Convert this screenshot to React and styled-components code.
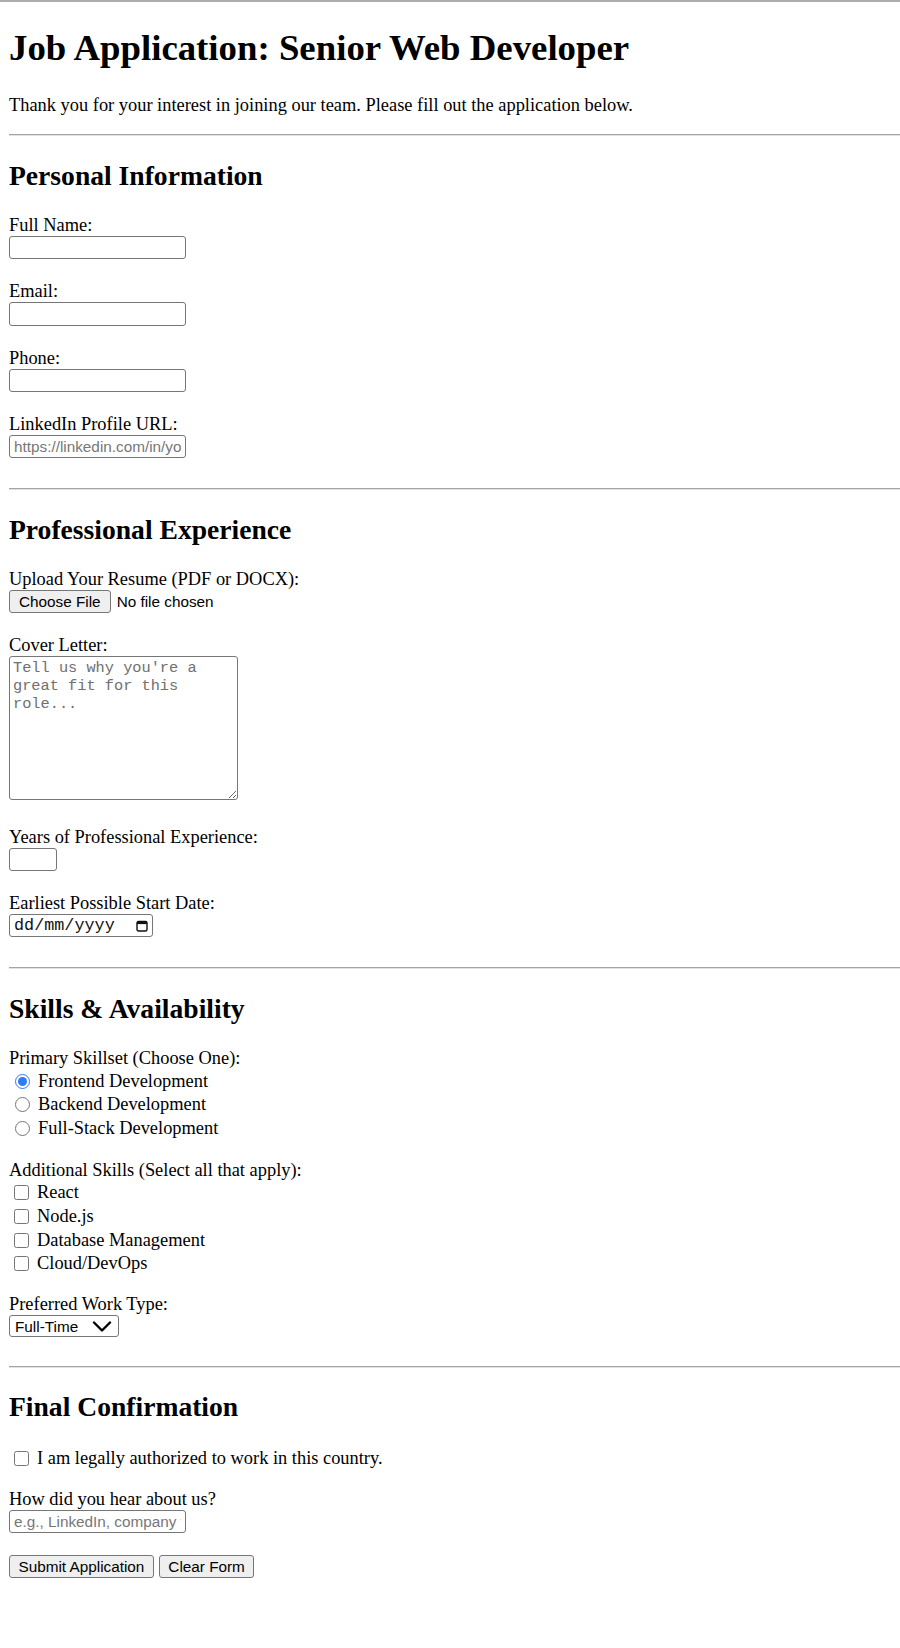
import styled, { createGlobalStyle } from "styled-components";

const GlobalStyle = createGlobalStyle`
  html, body {
    margin: 0;
    padding: 0;
    background: #fff;
  }
  body {
    font-family: "Liberation Serif", "Times New Roman", serif;
    font-size: 18.4px;
    color: #000;
  }
`;

const TopEdge = styled.div`
  height: 2px;
  background: #adadb0;
`;

const Page = styled.div`
  padding: 0 0 60px 9px;
`;

const Title = styled.h1`
  margin: 25px 0 0;
  font-size: 36.8px;
  line-height: 42px;
  font-weight: bold;
`;

const Intro = styled.p`
  margin: 26px 0 0;
  line-height: 21px;
`;

const Divider = styled.hr`
  margin: ${(p) => p.$top}px 0 0;
  height: 0;
  border: none;
  border-top: 1px solid #a4a4a4;
  border-bottom: 1px solid #e2e2e2;
`;

const Section = styled.section`
  padding-bottom: 10px;
`;

const SectionTitle = styled.h2`
  margin: ${(p) => p.$top ?? 24}px 0 21px;
  font-size: 27.6px;
  line-height: 32px;
  font-weight: bold;
`;

const Field = styled.div`
  padding-top: ${(p) => p.$top || 0}px;
  margin-bottom: ${(p) => p.$bottom ?? 20}px;
`;

const Label = styled.label`
  display: block;
  padding-top: 2px;
  line-height: 21px;
`;

const TextInput = styled.input`
  display: block;
  box-sizing: border-box;
  width: ${(p) => p.$w || 177}px;
  height: 23.3px;
  margin: 0;
  padding: 1px 4px;
  border: 1px solid #767676;
  border-radius: 3px;
  font-family: "Liberation Sans", Arial, sans-serif;
  font-size: 15.3px;
  color: #000;
  background: #fff;

  &::placeholder {
    color: #777;
  }
`;

const FileInput = styled.input`
  display: block;
  height: 23px;
  margin: 0;
  font-family: "Liberation Sans", Arial, sans-serif;
  font-size: 15.3px;
  color: #000;

  &::file-selector-button {
    box-sizing: border-box;
    height: 23px;
    margin: 0 6px 0 0;
    padding: 0 9px;
    border: 1px solid #767676;
    border-radius: 3px;
    background: #efefef;
    font-family: "Liberation Sans", Arial, sans-serif;
    font-size: 15.3px;
    color: #000;
  }
`;

const TextArea = styled.textarea`
  display: block;
  box-sizing: border-box;
  width: 229px;
  height: 144px;
  margin: 0;
  padding: 2px 3px;
  border: 1px solid #767676;
  border-radius: 3px;
  font-family: "Liberation Mono", "Courier New", monospace;
  font-size: 15.3px;
  line-height: 18px;

  &::placeholder {
    color: #707070;
  }
`;

const DateBox = styled.div`
  position: relative;
  width: 144px;
`;

const DateInput = styled(TextInput)`
  width: 144px;
  padding: 1px 4px;
  font-family: "Liberation Mono", "DejaVu Sans Mono", monospace;
  font-size: 16.8px;

  &::placeholder {
    color: #111;
  }
`;

const CalendarIcon = styled.svg`
  position: absolute;
  left: 127px;
  top: 6px;
  width: 12px;
  height: 12px;
  pointer-events: none;
`;

const OptionList = styled.div`
  display: flex;
  flex-direction: column;
`;

const Option = styled.label`
  display: flex;
  align-items: center;
  height: 23.6px;
  line-height: 21px;
`;

const Radio = styled.input`
  width: 15px;
  height: 15px;
  margin: 0 8px 0 6px;
  accent-color: #2f7bf5;
`;

const Check = styled.input`
  width: 15px;
  height: 15px;
  margin: 0 8px 0 5px;
`;

const SelectBox = styled.div`
  position: relative;
  width: 110px;
`;

const Select = styled.select`
  display: block;
  box-sizing: border-box;
  width: 110px;
  height: 22px;
  margin: 0;
  padding: 0 24px 0 5px;
  appearance: none;
  border: 1px solid #767676;
  border-radius: 3px;
  background: #fff;
  font-family: "Liberation Sans", Arial, sans-serif;
  font-size: 15.3px;
  color: #000;
`;

const Chevron = styled.svg`
  position: absolute;
  left: 83px;
  top: 6px;
  width: 20px;
  height: 11px;
  pointer-events: none;
`;

const Actions = styled.div`
  display: flex;
  gap: 5px;
`;

const Button = styled.button`
  box-sizing: border-box;
  height: 23px;
  padding: 0 8.5px;
  border: 1px solid #767676;
  border-radius: 3px;
  background: #efefef;
  font-family: "Liberation Sans", Arial, sans-serif;
  font-size: 15.3px;
  color: #000;
`;

const App = () => {
  return (
    <>
      <GlobalStyle />
      <TopEdge />
      <Page>
        <Title>Job Application: Senior Web Developer</Title>
        <Intro>
          Thank you for your interest in joining our team. Please fill out the
          application below.
        </Intro>
        <Divider $top={18} />

        <form onSubmit={(e) => e.preventDefault()}>
          <Section>
            <SectionTitle>Personal Information</SectionTitle>
            <Field>
              <Label htmlFor="fullName">Full Name:</Label>
              <TextInput id="fullName" type="text" />
            </Field>
            <Field>
              <Label htmlFor="email">Email:</Label>
              <TextInput id="email" type="email" />
            </Field>
            <Field>
              <Label htmlFor="phone">Phone:</Label>
              <TextInput id="phone" type="tel" />
            </Field>
            <Field>
              <Label htmlFor="linkedin">LinkedIn Profile URL:</Label>
              <TextInput
                id="linkedin"
                type="url"
                placeholder="https://linkedin.com/in/yourprofile"
              />
            </Field>
          </Section>
          <Divider $top={0} />

          <Section>
            <SectionTitle>Professional Experience</SectionTitle>
            <Field>
              <Label htmlFor="resume">Upload Your Resume (PDF or DOCX):</Label>
              <FileInput id="resume" type="file" accept=".pdf,.docx" />
            </Field>
            <Field $bottom={24.5}>
              <Label htmlFor="cover">Cover Letter:</Label>
              <TextArea
                id="cover"
                placeholder="Tell us why you're a great fit for this role..."
              />
            </Field>
            <Field>
              <Label htmlFor="years">Years of Professional Experience:</Label>
              <TextInput id="years" type="number" min="0" $w={48} />
            </Field>
            <Field>
              <Label htmlFor="start">Earliest Possible Start Date:</Label>
              <DateBox>
                <DateInput id="start" type="text" placeholder="dd/mm/yyyy" />
                <CalendarIcon viewBox="0 0 12 12">
                  <rect
                    x="1"
                    y="1.5"
                    width="10"
                    height="9.5"
                    rx="1.5"
                    fill="none"
                    stroke="#111"
                    strokeWidth="1.4"
                  />
                  <rect x="1" y="1.5" width="10" height="2.6" fill="#111" />
                </CalendarIcon>
              </DateBox>
            </Field>
          </Section>
          <Divider $top={0} />

          <Section>
            <SectionTitle>Skills &amp; Availability</SectionTitle>
            <Field $bottom={18}>
              <Label>Primary Skillset (Choose One):</Label>
              <OptionList>
                <Option>
                  <Radio type="radio" name="skillset" defaultChecked />
                  Frontend Development
                </Option>
                <Option>
                  <Radio type="radio" name="skillset" />
                  Backend Development
                </Option>
                <Option>
                  <Radio type="radio" name="skillset" />
                  Full-Stack Development
                </Option>
              </OptionList>
            </Field>
            <Field $bottom={17}>
              <Label>Additional Skills (Select all that apply):</Label>
              <OptionList>
                <Option>
                  <Check type="checkbox" />
                  React
                </Option>
                <Option>
                  <Check type="checkbox" />
                  Node.js
                </Option>
                <Option>
                  <Check type="checkbox" />
                  Database Management
                </Option>
                <Option>
                  <Check type="checkbox" />
                  Cloud/DevOps
                </Option>
              </OptionList>
            </Field>
            <Field $bottom={19}>
              <Label htmlFor="workType">Preferred Work Type:</Label>
              <SelectBox>
                <Select id="workType" defaultValue="full">
                  <option value="full">Full-Time</option>
                  <option value="part">Part-Time</option>
                  <option value="contract">Contract</option>
                </Select>
                <Chevron viewBox="0 0 20 11">
                  <path
                    d="M2 1.5 L10 9.5 L18 1.5"
                    fill="none"
                    stroke="#000"
                    strokeWidth="2.4"
                    strokeLinecap="round"
                    strokeLinejoin="round"
                  />
                </Chevron>
              </SelectBox>
            </Field>
          </Section>
          <Divider $top={0} />

          <Section>
            <SectionTitle $top={23}>Final Confirmation</SectionTitle>
            <Field $top={2} $bottom={17}>
              <Option>
                <Check type="checkbox" />I am legally authorized to work in
                this country.
              </Option>
            </Field>
            <Field $bottom={22}>
              <Label htmlFor="source">How did you hear about us?</Label>
              <TextInput
                id="source"
                type="text"
                placeholder="e.g., LinkedIn, company website"
              />
            </Field>
            <Actions>
              <Button type="submit">Submit Application</Button>
              <Button type="reset">Clear Form</Button>
            </Actions>
          </Section>
        </form>
      </Page>
    </>
  );
};

export default App;
